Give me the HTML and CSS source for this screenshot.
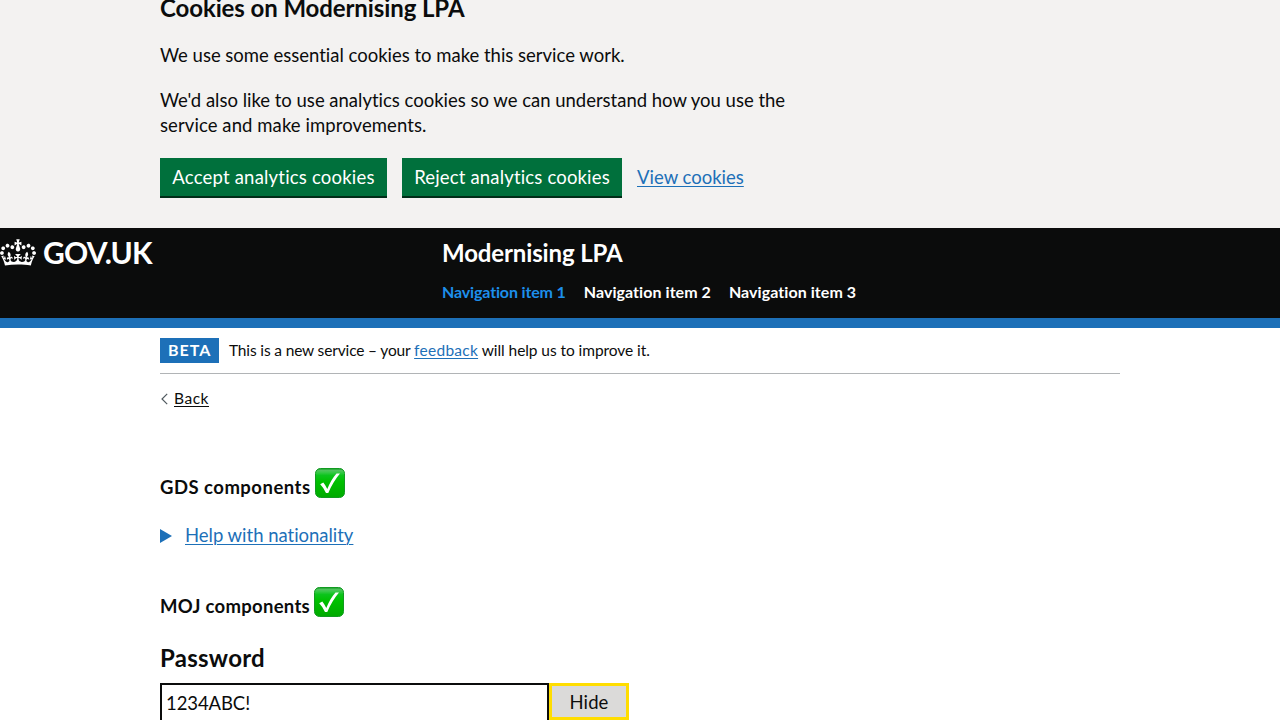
FILE: index.html
```html
<!DOCTYPE html>
<html lang="en">
<head><meta charset="utf-8"><title>Modernising LPA</title><link rel="stylesheet" href="styles.css"></head>
<body>
<section class="cookie-banner">
  <div class="container">
    <h2 class="heading-m cookie-title">Cookies on Modernising LPA</h2>
    <p class="body-text">We use some essential cookies to make this service work.</p>
    <p class="body-text">We'd also like to use analytics cookies so we can understand how you use the<br><span class="second-line">service and make improvements.</span></p>
    <div class="button-group">
      <button class="button accept">Accept analytics cookies</button>
      <button class="button reject">Reject analytics cookies</button>
      <a class="link" href="#">View cookies</a>
    </div>
  </div>
</section>
<header class="header">
  <a class="logo" href="#">
    <svg class="crown" viewBox="0 0 132 97" width="36" height="27" aria-hidden="true"><path fill="currentColor" fill-rule="evenodd" d="M25 30.2c3.5 1.5 7.7-.2 9.1-3.7 1.5-3.6-.2-7.8-3.9-9.2-3.6-1.4-7.6.3-9.1 3.9-1.4 3.5.3 7.5 3.9 9zM9 39.5c3.6 1.5 7.8-.2 9.2-3.7 1.5-3.6-.2-7.8-3.9-9.1-3.6-1.5-7.6.2-9.1 3.8-1.4 3.5.3 7.5 3.8 9zM4.4 57.2c3.5 1.5 7.7-.2 9.1-3.8 1.5-3.6-.2-7.7-3.9-9.1-3.5-1.5-7.6.3-9.1 3.8-1.4 3.5.3 7.6 3.9 9.1zm38.3-21.4c3.5 1.5 7.7-.2 9.1-3.8 1.5-3.6-.2-7.7-3.9-9.1-3.6-1.5-7.6.3-9.1 3.8-1.3 3.6.4 7.7 3.9 9.1zm64.4-5.6c-3.6 1.5-7.8-.2-9.1-3.7-1.5-3.6.2-7.8 3.8-9.2 3.6-1.4 7.7.3 9.2 3.9 1.3 3.5-.4 7.5-3.9 9zm15.9 9.3c-3.6 1.5-7.7-.2-9.1-3.7-1.5-3.6.2-7.8 3.7-9.1 3.6-1.5 7.7.2 9.2 3.8 1.5 3.5-.3 7.5-3.8 9zm4.7 17.7c-3.6 1.5-7.8-.2-9.2-3.8-1.5-3.6.2-7.7 3.9-9.1 3.6-1.5 7.7.3 9.2 3.8 1.3 3.5-.4 7.6-3.9 9.1zM89.3 35.8c-3.6 1.5-7.8-.2-9.2-3.8-1.4-3.6.2-7.7 3.9-9.1 3.6-1.5 7.7.3 9.2 3.8 1.4 3.6-.3 7.7-3.9 9.1zM69.7 17.7l8.9 4.7V9.3l-8.9 2.8c-.2-.3-.5-.6-.9-.9L72.4 0H59.6l3.5 11.2c-.3.3-.6.5-.9.9l-8.8-2.8v13.1l8.8-4.7c.3.3.6.7.9.9l-5 15.4v.1c-.2.8-.4 1.6-.4 2.4 0 4.1 3.1 7.5 7 8.1h.2c.3 0 .7.1 1 .1.4 0 .7 0 1-.1h.2c4-.6 7.1-4.1 7.1-8.1 0-.8-.1-1.7-.4-2.4V34l-5.1-15.4c.4-.2.7-.6 1-.9zM66 92.8c16.9 0 32.8 1.1 47.1 3.2 4-16.9 8.9-26.7 14-33.5l-9.6-3.4c1 4.9 1.1 7.2 0 10.2-1.5-1.4-3-4.3-4.2-8.7L108.6 76c2.8-2 5-3.2 7.5-3.3-4.4 9.4-10 11.9-13.6 11.2-4.3-.8-6.3-4.6-5.6-7.9 1-4.7 5.7-5.9 8-.5 4.3-8.7-3-11.4-7.6-8.8 7.1-7.2 7.9-13.5 2.1-21.1-8 6.1-8.1 12.3-4.5 20.8-4.7-5.4-12.1-2.5-9.5 6.2 3.4-5.2 7.9-2 7.2 3.1-.6 4.3-6.4 7.8-13.5 7.2-10.3-.9-10.9-8-11.2-13.8 2.5-.5 7.1 1.8 11 7.3L80.2 60c-4.1 4.4-8 5.3-12.3 5.4 1.4-4.4 8-11.6 8-11.6H55.5s6.4 7.2 7.9 11.6c-4.2-.1-8-1-12.3-5.4l1.4 16.4c3.9-5.5 8.5-7.7 10.9-7.3-.3 5.8-.9 12.8-11.1 13.8-7.2.6-12.9-2.9-13.5-7.2-.7-5 3.8-8.3 7.1-3.1 2.7-8.7-4.6-11.6-9.4-6.2 3.7-8.5 3.6-14.7-4.6-20.8-5.8 7.6-5 13.9 2.2 21.1-4.7-2.6-11.9.1-7.7 8.8 2.3-5.5 7.1-4.2 8.1.5.7 3.3-1.3 7.1-5.7 7.9-3.5.7-9-1.8-13.5-11.2 2.5.1 4.7 1.3 7.5 3.3l-4.7-15.4c-1.2 4.4-2.7 7.2-4.3 8.7-1.1-3-.9-5.3 0-10.2l-9.5 3.4c5 6.9 9.9 16.7 14 33.5 14.8-2.1 30.8-3.2 47.7-3.2z"/></svg>
    <span class="wordmark">GOV.UK</span>
  </a>
  <div class="header-content">
    <a class="service-name" href="#">Modernising LPA</a>
    <nav class="nav"><a class="nav-link active" href="#">Navigation item 1</a><a class="nav-link" href="#">Navigation item 2</a><a class="nav-link" href="#">Navigation item 3</a></nav>
  </div>
</header>
<div class="container">
  <div class="phase-banner"><strong class="tag">BETA</strong><span class="phase-text">This is a new service – your <a class="link feedback" href="#">feedback</a><span class="phase-tail"> will help us to improve it.</span></span></div>
  <a class="back" href="#"><svg class="chevron" width="8" height="12" viewBox="0 0 8 12" aria-hidden="true"><path d="M7.2 .8 2 6l5.2 5.2" fill="none" stroke="#505a5f" stroke-width="1.2"/></svg><span class="back-label">Back</span></a>
  <main class="main">
    <h3 class="heading-s gds"><span>GDS components</span>
      <svg class="check" width="30" height="30" viewBox="0 0 30 30" role="img"><defs><linearGradient id="g" x1="0" y1="0" x2="0" y2="1"><stop offset="0" stop-color="#149a24"/><stop offset=".07" stop-color="#4fc45c"/><stop offset=".14" stop-color="#35c845"/><stop offset=".24" stop-color="#0cc41c"/><stop offset=".45" stop-color="#00c000"/><stop offset="1" stop-color="#00aa00"/></linearGradient></defs><rect x=".5" y=".5" width="29" height="29" rx="5" fill="url(#g)" stroke="#119b20"/><path d="M5.2 16.3 8.3 14.5Q10.5 17.1 12.3 21C14.5 15.2 18 9.8 21.5 5.6H25C20.5 11 16.4 17.7 13.3 25H11Q8.8 20 5.2 16.3Z" fill="#fff"/></svg></h3>
    <div class="details"><svg class="arrow" width="12" height="14" viewBox="0 0 12 14" aria-hidden="true"><path d="M0 0 12 7 0 14Z" fill="#1d70b8"/></svg><a class="link help" href="#">Help with nationality</a></div>
    <h3 class="heading-s moj"><span>MOJ components</span>
      <svg class="check" width="30" height="30" viewBox="0 0 30 30" role="img"><rect x=".5" y=".5" width="29" height="29" rx="5" fill="url(#g)" stroke="#119b20"/><path d="M5.2 16.3 8.3 14.5Q10.5 17.1 12.3 21C14.5 15.2 18 9.8 21.5 5.6H25C20.5 11 16.4 17.7 13.3 25H11Q8.8 20 5.2 16.3Z" fill="#fff"/></svg></h3>
    <label class="heading-m password-label" for="pw">Password</label>
    <div class="password-row"><input class="input" id="pw" type="text" value="1234ABC!"><button class="toggle">Hide</button></div>
  </main>
</div>
</body></html>
```
FILE: styles.css
```css
*{box-sizing:border-box}
body{margin:0;height:720px;overflow:hidden;font:400 18.5px/25px Lato,sans-serif;font-variant-ligatures:none;color:#0b0c0c;background:#fff}
h2,h3,p{margin:0}
a{color:inherit;text-decoration:none}
.container{width:960px;margin:0 auto}
.cookie-banner{height:228px;background:#f3f2f1;display:flex}
.heading-m{font-size:24px;line-height:30px;font-weight:700}
.cookie-title{margin:-7px 0 20px;letter-spacing:-.1px}
.body-text{margin-bottom:20px;letter-spacing:-.01px;white-space:nowrap}
.second-line{letter-spacing:.086px}
.button-group{display:flex;gap:15px}
.button{height:38px;padding:1px 0 0;border:0;background:#00703c;box-shadow:0 2px 0 #002d18;color:#fff;font:inherit}
.accept{width:227px;letter-spacing:.2px}
.reject{width:220px;letter-spacing:.166px}
.link{color:#1d70b8;text-decoration:underline;text-decoration-thickness:1px;text-underline-offset:2px}
.button-group .link{line-height:38px;letter-spacing:0}
.header{height:100px;padding-top:10px;display:flex;background:#0b0c0c;border-bottom:10px solid #1d70b8;color:#fff}
.logo{width:442px;display:flex;align-items:flex-start;gap:7px}
.crown{margin-top:1px}
.wordmark{margin-top:-1px;font-size:30px;line-height:30px;font-weight:700;letter-spacing:-.8px}
.header-content{display:flex;flex-direction:column}
.service-name{font-size:24px;line-height:30px;font-weight:700;letter-spacing:-.139px}
.nav{display:flex;gap:18px;margin-top:14px;font-size:16px;line-height:20px;font-weight:700;letter-spacing:.06px}
.active{color:#1d8feb;letter-spacing:-.146px}
.phase-banner{height:46px;padding:10px 0;border-bottom:1px solid #b1b4b6;display:flex;gap:10px}
.tag{width:59px;height:25px;padding-left:8px;background:#1d70b8;color:#fff;font-size:16px;line-height:24px;letter-spacing:1px}
.phase-text{font-size:15.5px;line-height:24px;letter-spacing:-.15px}
.feedback{letter-spacing:.264px}
.phase-tail{letter-spacing:-.065px}
.back{display:flex;align-items:center;gap:6px;height:20px;margin-top:15px;font-size:15.5px;line-height:20px}
.back-label{margin-top:-2px;letter-spacing:.53px;text-decoration:underline;text-underline-offset:2px;text-decoration-thickness:1px}
.main{padding-top:59px}
.heading-s{display:flex;gap:4px;height:30px;font-size:18.5px;line-height:39px;font-weight:700}
.gds{letter-spacing:.48px}
.moj{letter-spacing:.29px}
.details{display:flex;align-items:center;gap:13px;height:25px;margin:25px 0 39px}
.help{letter-spacing:-.02px}
.password-label{display:block;margin:26px 0 10px;letter-spacing:.268px}
.password-row{display:flex}
.input{width:389px;height:39px;padding:0 4px;border:2px solid #0b0c0c;font:inherit;color:inherit;letter-spacing:-.09px;outline:0}
.toggle{width:80px;height:37px;padding:1px 0 0;border:3px solid #fd0;background:#dbdad9;font:inherit;color:inherit;letter-spacing:.11px;line-height:30px}
```
